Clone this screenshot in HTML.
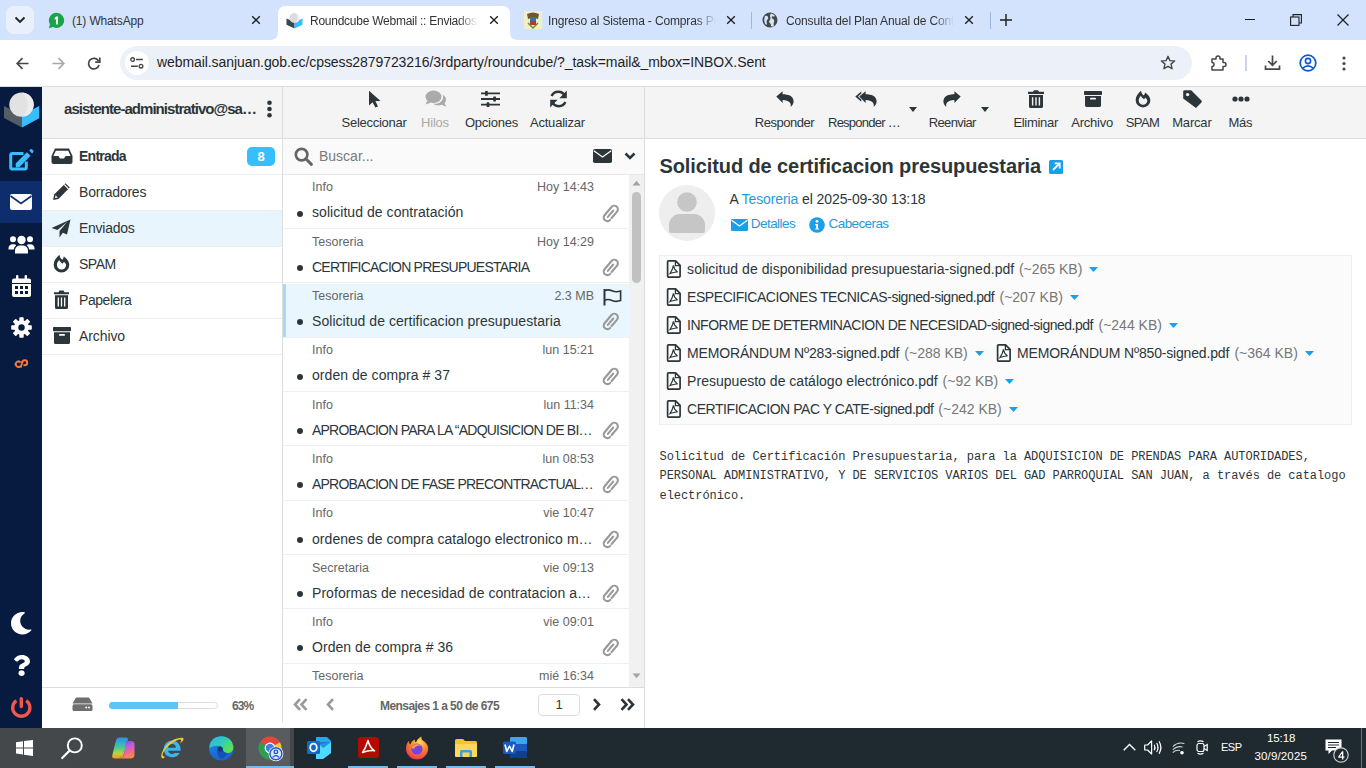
<!DOCTYPE html>
<html><head><meta charset="utf-8">
<style>
*{margin:0;padding:0;box-sizing:border-box}
html,body{width:1366px;height:768px;overflow:hidden;background:#fff;font-family:"Liberation Sans",sans-serif;color:#2c363a}
.a{position:absolute}
.t{position:absolute;white-space:nowrap;line-height:normal}
svg{position:absolute;overflow:visible}
</style></head>
<body>
<!-- ============ CHROME TAB STRIP ============ -->
<div class="a" style="left:0;top:0;width:1366px;height:40px;background:#d3e3fd"></div>
<!-- tab search -->
<div class="a" style="left:6px;top:6px;width:28px;height:28px;border-radius:8px;background:#e9effb"></div>
<svg style="left:14px;top:16px" width="12" height="8" viewBox="0 0 12 8"><path d="M1.5 1.5 L6 6 L10.5 1.5" fill="none" stroke="#1f1f1f" stroke-width="1.8"/></svg>
<!-- tab1 whatsapp -->
<svg style="left:48px;top:12px" width="17" height="17" viewBox="0 0 17 17"><path d="M8.5 0.8a7.6 7.6 0 0 0-6.6 11.4L0.9 16.2l4.1-1.1A7.6 7.6 0 1 0 8.5 0.8z" fill="#1aa34a"/><path d="M8.1 4.6H9.9V12.6H8.1V7L6.7 7.7V6.1Z" fill="#fff"/></svg>
<div class="t" style="left:72px;top:14px;font-size:12px;color:#333;letter-spacing:-0.15px">(1) WhatsApp</div>
<svg style="left:251px;top:15px" width="10" height="10" viewBox="0 0 10 10"><path d="M1.2 1.2L8.8 8.8M8.8 1.2L1.2 8.8" stroke="#1f1f1f" stroke-width="1.35"/></svg>
<!-- active tab -->
<svg style="left:270px;top:6px" width="250" height="34" viewBox="0 0 250 34"><path d="M0 34 Q8 34 8 26 L8 8 Q8 0 16 0 L232 0 Q240 0 240 8 L240 26 Q240 34 248 34 Z" fill="#fff"/></svg>
<svg style="left:286px;top:12px" width="17" height="17" viewBox="0 0 17 17"><path d="M0.5 6.5 L8.5 10 L8.5 16.5 L0.5 12.8Z" fill="#37474f"/><path d="M8.5 10 L16.5 6.5 L16.5 12.8 L8.5 16.5Z" fill="#37beff"/><circle cx="8.5" cy="6" r="5" fill="#dcdcdc"/><path d="M8.5 1 a5 5 0 0 1 0 10 a3 5 0 0 0 0-10z" fill="#f2f2f2"/></svg>
<div class="t" style="left:310px;top:14px;width:168px;overflow:hidden;font-size:12px;color:#333;letter-spacing:-0.25px;-webkit-mask-image:linear-gradient(90deg,#000 148px,transparent 168px)">Roundcube Webmail :: Enviados</div>
<svg style="left:489px;top:15px" width="10" height="10" viewBox="0 0 10 10"><path d="M1.2 1.2L8.8 8.8M8.8 1.2L1.2 8.8" stroke="#1f1f1f" stroke-width="1.35"/></svg>
<!-- tab3 -->
<svg style="left:524px;top:11px" width="18" height="18" viewBox="0 0 18 18"><rect x="0" y="0" width="18" height="18" fill="#f2efc8"/><path d="M3 3 Q9 0 15 3 L14 8 Q9 6 4 8Z" fill="#6b5a2a"/><rect x="6" y="6" width="6" height="8" fill="#3c6fb6"/><rect x="6" y="10" width="6" height="4" fill="#c9302c"/><path d="M4 12 L9 17 L14 12" fill="none" stroke="#6b8a3a" stroke-width="1.5"/></svg>
<div class="t" style="left:548px;top:14px;width:168px;overflow:hidden;font-size:12px;color:#333;letter-spacing:-0.15px;-webkit-mask-image:linear-gradient(90deg,#000 148px,transparent 168px)">Ingreso al Sistema - Compras Públicas</div>
<svg style="left:726px;top:15px" width="10" height="10" viewBox="0 0 10 10"><path d="M1.2 1.2L8.8 8.8M8.8 1.2L1.2 8.8" stroke="#1f1f1f" stroke-width="1.35"/></svg>
<div class="a" style="left:751px;top:12px;width:1px;height:17px;background:#9fb7de"></div>
<!-- tab4 -->
<svg style="left:762px;top:12px" width="16" height="16" viewBox="0 0 16 16"><circle cx="8" cy="8" r="7.5" fill="#474747"/><path d="M3 4 Q5 3 6 5 Q7 7 5 8 Q4 10 5 12 L4 13 Q1 10 3 4z M9 1.5 Q12 2 13 4 Q11 5 10 4 Q9 6 11 7 Q13 8 12 10 Q11 12 12 14 Q10 15 9 14 Q9 12 8 11 Q6 10 8 8 Q9 6 8 4 Q8 2 9 1.5z" fill="#d3e3fd"/></svg>
<div class="t" style="left:786px;top:14px;width:168px;overflow:hidden;font-size:12px;color:#333;letter-spacing:-0.15px;-webkit-mask-image:linear-gradient(90deg,#000 148px,transparent 168px)">Consulta del Plan Anual de Contratación</div>
<svg style="left:964px;top:15px" width="10" height="10" viewBox="0 0 10 10"><path d="M1.2 1.2L8.8 8.8M8.8 1.2L1.2 8.8" stroke="#1f1f1f" stroke-width="1.35"/></svg>
<div class="a" style="left:990px;top:12px;width:1px;height:17px;background:#9fb7de"></div>
<svg style="left:999px;top:13px" width="14" height="14" viewBox="0 0 14 14"><path d="M7 1V13M1 7H13" stroke="#1f1f1f" stroke-width="1.45"/></svg>
<!-- window controls -->
<div class="a" style="left:1245px;top:19px;width:10px;height:1.2px;background:#1f1f1f"></div>
<svg style="left:1290px;top:14px" width="12" height="12" viewBox="0 0 12 12"><rect x="0.6" y="3" width="8.4" height="8.4" fill="none" stroke="#1f1f1f" stroke-width="1.1"/><path d="M3 3V0.6H11.4V9H9" fill="none" stroke="#1f1f1f" stroke-width="1.1"/></svg>
<svg style="left:1337px;top:14px" width="12" height="12" viewBox="0 0 12 12"><path d="M0.5 0.5L11.5 11.5M11.5 0.5L0.5 11.5" stroke="#1f1f1f" stroke-width="1.2"/></svg>

<!-- ============ TOOLBAR ============ -->
<div class="a" style="left:0;top:40px;width:1366px;height:46px;background:#fff;border-radius:8px 8px 0 0"></div>
<svg style="left:16px;top:57px" width="13" height="13" viewBox="0 0 13 13"><path d="M12.5 6.5H1.5M6.5 1.2L1.2 6.5L6.5 11.8" fill="none" stroke="#474747" stroke-width="1.7"/></svg>
<svg style="left:52px;top:57px" width="13" height="13" viewBox="0 0 13 13"><path d="M0.5 6.5H11.5M6.5 1.2L11.8 6.5L6.5 11.8" fill="none" stroke="#a8a8a8" stroke-width="1.7"/></svg>
<svg style="left:87px;top:57px" width="14" height="13" viewBox="0 0 14 13"><path d="M11.6 4.2A5.3 5.3 0 1 0 12 8" fill="none" stroke="#474747" stroke-width="1.7"/><path d="M12.8 0.6V5.2H8.2" fill="none" stroke="#474747" stroke-width="1.7"/></svg>
<div class="a" style="left:120px;top:46px;width:1072px;height:34px;border-radius:17px;background:#ecf0f8"></div>
<div class="a" style="left:124.5px;top:51px;width:24px;height:24px;border-radius:12px;background:#fff"></div>
<svg style="left:130px;top:57px" width="14" height="12" viewBox="0 0 14 12"><circle cx="2.6" cy="2.6" r="1.8" fill="none" stroke="#474747" stroke-width="1.4"/><path d="M6 2.6H12.8M1 9.2H7.8" stroke="#474747" stroke-width="1.5"/><circle cx="11" cy="9.2" r="1.8" fill="none" stroke="#474747" stroke-width="1.4"/></svg>
<div class="t" style="left:157px;top:54px;font-size:14px;color:#1f1f1f;letter-spacing:-0.08px">webmail.sanjuan.gob.ec/cpsess2879723216/3rdparty/roundcube/?_task=mail&amp;_mbox=INBOX.Sent</div>
<svg style="left:1160px;top:55px" width="16" height="16" viewBox="0 0 16 16"><path d="M8 1.3L9.9 5.6L14.6 6L11 9.1L12.1 13.7L8 11.3L3.9 13.7L5 9.1L1.4 6L6.1 5.6Z" fill="none" stroke="#474747" stroke-width="1.4" stroke-linejoin="round"/></svg>
<svg style="left:1210px;top:55px" width="17" height="17" viewBox="0 0 17 17"><path d="M2 4H6V3A2 2 0 0 1 10 3V4H13V7.5H14A2 2 0 0 1 14 11.5H13V15H2V11.5A2 2 0 0 0 2 7.5Z" fill="none" stroke="#474747" stroke-width="1.5" stroke-linejoin="round"/></svg>
<div class="a" style="left:1245px;top:55px;width:1.5px;height:16px;background:#c7d4ea"></div>
<svg style="left:1264px;top:54px" width="17" height="17" viewBox="0 0 17 17"><path d="M8.5 1.5V11M4.2 7L8.5 11.3L12.8 7M1.5 11.5V15.2H15.5V11.5" fill="none" stroke="#474747" stroke-width="1.7"/></svg>
<svg style="left:1299px;top:54px" width="18" height="18" viewBox="0 0 18 18"><circle cx="9" cy="9" r="7.8" fill="none" stroke="#0b57d0" stroke-width="1.7"/><circle cx="9" cy="7" r="2.6" fill="none" stroke="#0b57d0" stroke-width="1.6"/><path d="M3.8 14.2Q9 9.6 14.2 14.2" fill="none" stroke="#0b57d0" stroke-width="1.6"/></svg>
<svg style="left:1342px;top:56px" width="4" height="15" viewBox="0 0 4 15"><circle cx="2" cy="2" r="1.6" fill="#474747"/><circle cx="2" cy="7.5" r="1.6" fill="#474747"/><circle cx="2" cy="13" r="1.6" fill="#474747"/></svg>
<div class="a" style="left:0;top:86px;width:1366px;height:1px;background:#dcdcdc"></div>

<!-- ============ TASKMENU ============ -->
<div class="a" style="left:0;top:87px;width:42px;height:641px;background:#071a40"></div>
<!-- logo -->
<svg style="left:3px;top:91px" width="37" height="37" viewBox="0 0 37 37"><path d="M1 15 L19 24 L19 36.4 L1 27Z" fill="#535d63"/><path d="M19 24 L36.2 15 L36.2 27.3 L19 36.4Z" fill="#37beff"/><circle cx="18.5" cy="13.6" r="12.2" fill="#e2e2e2"/><path d="M18.5 1.4 A12.2 12.2 0 0 1 18.5 25.8 A6 12.2 0 0 0 18.5 1.4Z" fill="#ececec"/></svg>
<!-- compose -->
<svg style="left:8px;top:147px" width="26" height="26" viewBox="0 0 26 26"><path d="M15.5 6.6H4.2A1.5 1.5 0 0 0 2.7 8.1V20.6A1.5 1.5 0 0 0 4.2 22.1H16.8A1.5 1.5 0 0 0 18.3 20.6V14.5" fill="none" stroke="#37beff" stroke-width="3"/><path d="M7.6 16.6L18.9 5.2L22.6 8.8L11.3 20.2L7.9 20.4Z" fill="#37beff"/><path d="M21.2 3.6L22.2 2.6A1.6 1.6 0 0 1 24.4 2.6L25 3.2A1.6 1.6 0 0 1 25 5.4L24 6.4Z" fill="#37beff"/></svg>
<!-- mail active -->
<div class="a" style="left:0;top:181px;width:42px;height:42px;background:#0d2d6c"></div>
<svg style="left:10px;top:194px" width="22" height="16" viewBox="0 0 22 16"><rect x="0" y="0" width="22" height="16" rx="2" fill="#fff"/><path d="M0.5 2 L11 9.5 L21.5 2" fill="none" stroke="#0d2d6c" stroke-width="1.6"/></svg>
<!-- contacts -->
<svg style="left:8px;top:235px" width="27" height="19" viewBox="0 0 27 19"><circle cx="5" cy="4.2" r="3" fill="#fff"/><circle cx="22" cy="4.2" r="3" fill="#fff"/><circle cx="13.5" cy="5" r="4.2" fill="#fff"/><path d="M7 18.5V15.5A5 5 0 0 1 12 10.5H15A5 5 0 0 1 20 15.5V18.5Z" fill="#fff"/><path d="M0.5 13.5A4 4 0 0 1 4.5 9.3H6.3A4 4 0 0 1 8.2 10.2A6 6 0 0 0 5.8 14.5H0.5Z M26.5 13.5A4 4 0 0 0 22.5 9.3H20.7A4 4 0 0 0 18.8 10.2A6 6 0 0 1 21.2 14.5H26.5Z" fill="#fff"/></svg>
<!-- calendar -->
<svg style="left:12px;top:275px" width="19" height="22" viewBox="0 0 19 22"><rect x="4" y="0" width="2.4" height="5" rx="1" fill="#fff"/><rect x="12.6" y="0" width="2.4" height="5" rx="1" fill="#fff"/><path d="M0 5.5A2 2 0 0 1 2 3.5H17A2 2 0 0 1 19 5.5V8H0Z" fill="#fff"/><path d="M0 9H19V20A2 2 0 0 1 17 22H2A2 2 0 0 1 0 20Z" fill="#fff"/><g fill="#071a40"><rect x="3" y="11" width="3" height="3"/><rect x="8" y="11" width="3" height="3"/><rect x="13" y="11" width="3" height="3"/><rect x="3" y="16" width="3" height="3"/><rect x="8" y="16" width="3" height="3"/><rect x="13" y="16" width="3" height="3"/></g></svg>
<!-- settings gear -->
<svg style="left:11px;top:317px" width="21" height="21" viewBox="0 0 21 21"><g transform="translate(10.5 10.5)" fill="#fff"><circle r="7.3"/><rect x="-2.2" y="-10.3" width="4.4" height="5" rx="0.8"/><rect x="-2.2" y="5.3" width="4.4" height="5" rx="0.8"/><rect x="-10.3" y="-2.2" width="5" height="4.4" rx="0.8"/><rect x="5.3" y="-2.2" width="5" height="4.4" rx="0.8"/><g transform="rotate(45)"><rect x="-2.2" y="-10.3" width="4.4" height="5" rx="0.8"/><rect x="-2.2" y="5.3" width="4.4" height="5" rx="0.8"/><rect x="-10.3" y="-2.2" width="5" height="4.4" rx="0.8"/><rect x="5.3" y="-2.2" width="5" height="4.4" rx="0.8"/></g><circle r="3.2" fill="#071a40"/></g></svg>
<!-- cP -->
<svg style="left:14.5px;top:358.5px" width="14" height="9" viewBox="0 0 14 9"><path d="M5.6 3.6A2.7 2.7 0 1 0 5 7.4" fill="none" stroke="#f4773e" stroke-width="2"/><path d="M7.2 3.4A2.5 2.5 0 1 1 9.6 6.2H8.4" fill="none" stroke="#f4773e" stroke-width="2"/><path d="M7.6 2.2L5.6 8.6" stroke="#f4773e" stroke-width="1.9"/></svg>
<!-- moon -->
<svg style="left:11px;top:612px" width="20.5" height="22.5" viewBox="27 0 458 512" preserveAspectRatio="none"><path d="M283.211 512c78.962 0 151.079-35.925 198.857-94.792 7.068-8.708-.639-21.43-11.562-19.35-124.203 23.654-238.262-71.576-238.262-196.954 0-72.222 38.662-138.635 101.498-174.394 9.686-5.512 7.25-20.197-3.756-22.23A258.156 258.156 0 0 0 283.211 0c-141.309 0-256 114.511-256 256 0 141.309 114.511 256 256 256z" fill="#fff"/></svg>
<!-- question -->
<svg style="left:14px;top:654.5px" width="16" height="21" viewBox="24 0 354 512" preserveAspectRatio="none"><path d="M202.021 0C122.202 0 70.503 32.703 29.914 91.026c-7.363 10.58-5.093 25.086 5.178 32.874l43.138 32.709c10.373 7.865 25.132 6.026 33.253-4.148 25.049-31.381 43.63-49.449 82.757-49.449 30.764 0 68.816 19.799 68.816 49.631 0 22.552-18.617 34.134-48.993 51.164-35.423 19.86-82.299 44.576-82.299 106.405V320c0 13.255 10.745 24 24 24h72.471c13.255 0 24-10.745 24-24v-5.773c0-42.86 125.268-44.645 125.268-160.627C377.504 66.256 286.902 0 202.021 0zM192 373.459c-38.196 0-69.271 31.075-69.271 69.271 0 38.195 31.075 69.27 69.271 69.27s69.271-31.075 69.271-69.271-31.075-69.27-69.271-69.27z" fill="#fff"/></svg>
<!-- power -->
<svg style="left:10px;top:695px" width="23" height="24" viewBox="0 0 23 24"><path d="M6.4 5.6A8.6 8.6 0 1 0 16.2 5.6" fill="none" stroke="#f0574e" stroke-width="3.3"/><path d="M11.3 3.6V11.6" stroke="#f0574e" stroke-width="3.4" stroke-linecap="round"/></svg>

<!-- ============ FOLDER PANEL ============ -->
<div class="a" style="left:42px;top:87px;width:240px;height:51px;background:#f4f4f4"></div>
<div class="a" style="left:42px;top:138px;width:240px;height:1px;background:#ddd"></div>
<div class="a" style="left:282px;top:87px;width:1px;height:635px;background:#ddd"></div>
<div class="t" style="left:64px;top:99.5px;font-size:15px;font-weight:700;color:#2c363a;letter-spacing:-0.96px">asistente-administrativo@sa…</div>
<svg style="left:266px;top:100px" width="7" height="18" viewBox="0 0 7 18"><circle cx="3.5" cy="2.7" r="2.3" fill="#2c363a"/><circle cx="3.5" cy="9" r="2.3" fill="#2c363a"/><circle cx="3.5" cy="15.3" r="2.3" fill="#2c363a"/></svg>
<!-- folder rows -->
<div class="a" style="left:42px;top:174px;width:240px;height:1px;background:#eee"></div>
<div class="a" style="left:42px;top:210px;width:240px;height:1px;background:#eee"></div>
<div class="a" style="left:42px;top:211px;width:240px;height:35px;background:#e9f5fc"></div>
<div class="a" style="left:42px;top:246px;width:240px;height:1px;background:#eee"></div>
<div class="a" style="left:42px;top:282px;width:240px;height:1px;background:#eee"></div>
<div class="a" style="left:42px;top:318px;width:240px;height:1px;background:#eee"></div>
<div class="a" style="left:42px;top:354px;width:240px;height:1px;background:#eee"></div>
<!-- inbox icon -->
<svg style="left:51px;top:148px" width="22" height="16" viewBox="0 0 22 16"><path d="M4 0.5H18L21.5 8V14A2 2 0 0 1 19.5 16H2.5A2 2 0 0 1 0.5 14V8Z" fill="#2c363a"/><path d="M4.8 2.8H17.2L19.6 8H14.5L13 10.5H9L7.5 8H2.4Z" fill="#fff"/></svg>
<div class="t" style="left:79px;top:148px;font-size:14px;font-weight:700;color:#2c363a;letter-spacing:-0.75px">Entrada</div>
<div class="a" style="left:247px;top:147px;width:28px;height:19px;border-radius:5px;background:#37beff"></div>
<div class="t" style="left:247px;top:149px;width:28px;text-align:center;font-size:13px;font-weight:700;color:#fff">8</div>
<!-- pencil -->
<svg style="left:52px;top:182px" width="19" height="19" viewBox="0 0 19 19"><path d="M13.5 1.2L17.8 5.5L6.4 16.9L1.2 18L2.1 12.6Z" fill="#2c363a"/><path d="M3.6 13.2L5.8 15.4L3 16.1Z" fill="#fff"/><path d="M12.2 2.5L16.5 6.8" stroke="#fff" stroke-width="1.2"/></svg>
<div class="t" style="left:79px;top:184px;font-size:14px;color:#2c363a;letter-spacing:-0.2px">Borradores</div>
<!-- paper plane -->
<svg style="left:51px;top:219px" width="20" height="19" viewBox="0 0 20 19"><path d="M19.5 0.5L0.5 9L6.5 11L16 3L8.5 12V18.5L11.8 13.8L16 15.5Z" fill="#2c363a"/></svg>
<div class="t" style="left:79px;top:220px;font-size:14px;color:#2c363a;letter-spacing:-0.25px">Enviados</div>
<!-- fire -->
<svg style="left:53px;top:254px" width="17" height="19" viewBox="0 0 17 19"><path d="M8.5 18.5A7.8 7.8 0 0 1 0.7 10.7C0.7 6.8 3.3 3.6 6.4 0.8C6.9 3.5 8 4.8 9.3 5.8C10.1 4.8 10.6 3.8 10.8 2.6C14 4.8 16.3 7.9 16.3 10.7A7.8 7.8 0 0 1 8.5 18.5Z" fill="#2c363a"/><path d="M8.5 15.6A4.6 4.6 0 0 1 3.9 11C3.9 9 4.9 7.6 6.3 6C6.8 7.6 8.2 8.8 9.6 9.8C10 9.2 10.7 8.6 10.9 7.8C12.3 9.2 13.1 10.2 13.1 11A4.6 4.6 0 0 1 8.5 15.6Z" fill="#fff"/></svg>
<div class="t" style="left:79px;top:256px;font-size:14px;color:#2c363a;letter-spacing:-0.5px">SPAM</div>
<!-- trash -->
<svg style="left:54px;top:290px" width="15" height="19" viewBox="0 0 15 19"><path d="M0 2.2H4.5L5.5 0.5H9.5L10.5 2.2H15V4.3H0Z" fill="#2c363a"/><path d="M1 5.3H14V17.5A1.5 1.5 0 0 1 12.5 19H2.5A1.5 1.5 0 0 1 1 17.5Z" fill="#2c363a"/><path d="M4.3 7.5V16.5M7.5 7.5V16.5M10.7 7.5V16.5" stroke="#fff" stroke-width="1.3"/></svg>
<div class="t" style="left:79px;top:292px;font-size:14px;color:#2c363a;letter-spacing:-0.45px">Papelera</div>
<!-- archive -->
<svg style="left:53px;top:327px" width="18" height="17" viewBox="0 0 18 17"><rect x="0" y="0" width="18" height="4.2" rx="0.8" fill="#2c363a"/><path d="M1 5.2H17V15.5A1.5 1.5 0 0 1 15.5 17H2.5A1.5 1.5 0 0 1 1 15.5Z" fill="#2c363a"/><rect x="6" y="7" width="6" height="1.8" rx="0.9" fill="#fff"/></svg>
<div class="t" style="left:79px;top:328px;font-size:14px;color:#2c363a;letter-spacing:-0.1px">Archivo</div>
<!-- footer -->
<div class="a" style="left:42px;top:687px;width:240px;height:1px;background:#ddd"></div>
<svg style="left:72px;top:697px" width="21" height="14" viewBox="0 0 21 14"><path d="M4 0.5H17L20.5 6.5H0.5Z" fill="#6f6f6f"/><rect x="0.5" y="7.2" width="20" height="6.8" rx="1.5" fill="#6f6f6f"/><circle cx="14.2" cy="10.6" r="1" fill="#fff"/><circle cx="17" cy="10.6" r="1" fill="#fff"/></svg>
<div class="a" style="left:109px;top:701.5px;width:109px;height:7.5px;border-radius:4px;border:1px solid #dcdcdc;background:#fff"></div>
<div class="a" style="left:109px;top:701.5px;width:69px;height:7.5px;border-radius:4px 0 0 4px;background:#5ec4f4"></div>
<div class="t" style="left:232px;top:698.5px;font-size:12px;font-weight:700;color:#666;letter-spacing:-0.9px">63%</div>

<!-- ============ MESSAGE LIST ============ -->
<div class="a" style="left:283px;top:87px;width:361px;height:51px;background:#f4f4f4"></div>
<div class="a" style="left:283px;top:138px;width:361px;height:1px;background:#ddd"></div>
<div class="a" style="left:644px;top:87px;width:1px;height:641px;background:#ddd"></div>
<div class="a" style="left:283px;top:139px;width:361px;height:35px;background:#fafafa"></div>
<div class="a" style="left:283px;top:174px;width:361px;height:1px;background:#e8e8e8"></div>
<div class="a" style="left:629px;top:175px;width:15px;height:512px;background:#f1f1f1"></div>
<div class="a" style="left:632px;top:192px;width:9px;height:91px;border-radius:4.5px;background:#c1c1c1"></div>
<svg style="left:632px;top:180px" width="9" height="6" viewBox="0 0 9 6"><path d="M0.5 5.5L4.5 0.8L8.5 5.5Z" fill="#a3a3a3"/></svg>
<svg style="left:632px;top:673px" width="9" height="6" viewBox="0 0 9 6"><path d="M0.5 0.5L4.5 5.2L8.5 0.5Z" fill="#a3a3a3"/></svg>
<div class="a" style="left:283px;top:228.0px;width:346px;height:1px;background:#efefef"></div>
<div class="t" style="left:312px;top:180.3px;font-size:12.5px;color:#666">Info</div>
<div class="t" style="left:480px;top:180.3px;width:114px;text-align:right;font-size:12.5px;color:#666">Hoy 14:43</div>
<div class="a" style="left:297px;top:210.5px;width:6px;height:6px;border-radius:3px;background:#2c363a"></div>
<div class="t" style="left:312px;top:204.4px;width:282px;overflow:hidden;text-overflow:ellipsis;font-size:14px;color:#2c363a;letter-spacing:0.05px">solicitud de contratación</div>
<svg style="left:602px;top:203.5px" width="19" height="20" viewBox="0 0 19 20"><g transform="rotate(40 9.5 10)"><path d="M12.2 13V4.6A3.6 3.6 0 0 0 5 4.6V15.4A3.6 3.6 0 0 0 12.2 15.4" fill="none" stroke="#999" stroke-width="2.1" stroke-linecap="round"/><path d="M8.6 6.2V14.6" fill="none" stroke="#999" stroke-width="2" stroke-linecap="round"/></g></svg>
<div class="a" style="left:283px;top:282.35px;width:346px;height:1px;background:#efefef"></div>
<div class="t" style="left:312px;top:234.65px;font-size:12.5px;color:#666">Tesoreria</div>
<div class="t" style="left:480px;top:234.65px;width:114px;text-align:right;font-size:12.5px;color:#666">Hoy 14:29</div>
<div class="a" style="left:297px;top:264.85px;width:6px;height:6px;border-radius:3px;background:#2c363a"></div>
<div class="t" style="left:312px;top:258.75px;width:282px;overflow:hidden;text-overflow:ellipsis;font-size:14px;color:#2c363a;letter-spacing:-0.78px">CERTIFICACION PRESUPUESTARIA</div>
<svg style="left:602px;top:257.85px" width="19" height="20" viewBox="0 0 19 20"><g transform="rotate(40 9.5 10)"><path d="M12.2 13V4.6A3.6 3.6 0 0 0 5 4.6V15.4A3.6 3.6 0 0 0 12.2 15.4" fill="none" stroke="#999" stroke-width="2.1" stroke-linecap="round"/><path d="M8.6 6.2V14.6" fill="none" stroke="#999" stroke-width="2" stroke-linecap="round"/></g></svg>
<div class="a" style="left:283px;top:283.7px;width:346px;height:54px;background:#e9f6fd"></div>
<div class="a" style="left:283px;top:283.7px;width:2.5px;height:54px;background:#a9daf3"></div>
<div class="a" style="left:283px;top:336.7px;width:346px;height:1px;background:#efefef"></div>
<div class="t" style="left:312px;top:289.0px;font-size:12.5px;color:#666">Tesoreria</div>
<div class="t" style="left:480px;top:289.0px;width:114px;text-align:right;font-size:12.5px;color:#666">2.3 MB</div>
<div class="a" style="left:297px;top:319.2px;width:6px;height:6px;border-radius:3px;background:#2c363a"></div>
<div class="t" style="left:312px;top:313.1px;width:282px;overflow:hidden;text-overflow:ellipsis;font-size:14px;color:#2c363a;letter-spacing:0.05px">Solicitud de certificacion presupuestaria</div>
<svg style="left:602px;top:312.2px" width="19" height="20" viewBox="0 0 19 20"><g transform="rotate(40 9.5 10)"><path d="M12.2 13V4.6A3.6 3.6 0 0 0 5 4.6V15.4A3.6 3.6 0 0 0 12.2 15.4" fill="none" stroke="#999" stroke-width="2.1" stroke-linecap="round"/><path d="M8.6 6.2V14.6" fill="none" stroke="#999" stroke-width="2" stroke-linecap="round"/></g></svg>
<svg style="left:602.5px;top:288.3px" width="19" height="18" viewBox="0 0 19 18"><path d="M1.5 1V17.5" stroke="#2c363a" stroke-width="2"/><path d="M1.5 2.6Q5 1 9 2.8Q13 4.6 17.6 3.1V12.6Q13 14.2 9 12.4Q5 10.6 1.5 12.2" fill="none" stroke="#2c363a" stroke-width="1.6"/></svg>
<div class="a" style="left:283px;top:391.05px;width:346px;height:1px;background:#efefef"></div>
<div class="t" style="left:312px;top:343.35px;font-size:12.5px;color:#666">Info</div>
<div class="t" style="left:480px;top:343.35px;width:114px;text-align:right;font-size:12.5px;color:#666">lun 15:21</div>
<div class="a" style="left:297px;top:373.55px;width:6px;height:6px;border-radius:3px;background:#2c363a"></div>
<div class="t" style="left:312px;top:367.45px;width:282px;overflow:hidden;text-overflow:ellipsis;font-size:14px;color:#2c363a;letter-spacing:0.05px">orden de compra # 37</div>
<svg style="left:602px;top:366.55px" width="19" height="20" viewBox="0 0 19 20"><g transform="rotate(40 9.5 10)"><path d="M12.2 13V4.6A3.6 3.6 0 0 0 5 4.6V15.4A3.6 3.6 0 0 0 12.2 15.4" fill="none" stroke="#999" stroke-width="2.1" stroke-linecap="round"/><path d="M8.6 6.2V14.6" fill="none" stroke="#999" stroke-width="2" stroke-linecap="round"/></g></svg>
<div class="a" style="left:283px;top:445.4px;width:346px;height:1px;background:#efefef"></div>
<div class="t" style="left:312px;top:397.7px;font-size:12.5px;color:#666">Info</div>
<div class="t" style="left:480px;top:397.7px;width:114px;text-align:right;font-size:12.5px;color:#666">lun 11:34</div>
<div class="a" style="left:297px;top:427.9px;width:6px;height:6px;border-radius:3px;background:#2c363a"></div>
<div class="t" style="left:312px;top:421.8px;width:282px;overflow:hidden;text-overflow:ellipsis;font-size:14px;color:#2c363a;letter-spacing:-0.78px">APROBACION PARA LA “ADQUISICION DE BIENES</div>
<svg style="left:602px;top:420.9px" width="19" height="20" viewBox="0 0 19 20"><g transform="rotate(40 9.5 10)"><path d="M12.2 13V4.6A3.6 3.6 0 0 0 5 4.6V15.4A3.6 3.6 0 0 0 12.2 15.4" fill="none" stroke="#999" stroke-width="2.1" stroke-linecap="round"/><path d="M8.6 6.2V14.6" fill="none" stroke="#999" stroke-width="2" stroke-linecap="round"/></g></svg>
<div class="a" style="left:283px;top:499.75px;width:346px;height:1px;background:#efefef"></div>
<div class="t" style="left:312px;top:452.05px;font-size:12.5px;color:#666">Info</div>
<div class="t" style="left:480px;top:452.05px;width:114px;text-align:right;font-size:12.5px;color:#666">lun 08:53</div>
<div class="a" style="left:297px;top:482.25px;width:6px;height:6px;border-radius:3px;background:#2c363a"></div>
<div class="t" style="left:312px;top:476.15px;width:282px;overflow:hidden;text-overflow:ellipsis;font-size:14px;color:#2c363a;letter-spacing:-0.78px">APROBACION DE FASE PRECONTRACTUAL PARA</div>
<svg style="left:602px;top:475.25px" width="19" height="20" viewBox="0 0 19 20"><g transform="rotate(40 9.5 10)"><path d="M12.2 13V4.6A3.6 3.6 0 0 0 5 4.6V15.4A3.6 3.6 0 0 0 12.2 15.4" fill="none" stroke="#999" stroke-width="2.1" stroke-linecap="round"/><path d="M8.6 6.2V14.6" fill="none" stroke="#999" stroke-width="2" stroke-linecap="round"/></g></svg>
<div class="a" style="left:283px;top:554.1px;width:346px;height:1px;background:#efefef"></div>
<div class="t" style="left:312px;top:506.4px;font-size:12.5px;color:#666">Info</div>
<div class="t" style="left:480px;top:506.4px;width:114px;text-align:right;font-size:12.5px;color:#666">vie 10:47</div>
<div class="a" style="left:297px;top:536.6px;width:6px;height:6px;border-radius:3px;background:#2c363a"></div>
<div class="t" style="left:312px;top:530.5px;width:282px;overflow:hidden;text-overflow:ellipsis;font-size:14px;color:#2c363a;letter-spacing:0.05px">ordenes de compra catalogo electronico mes de septiembre</div>
<svg style="left:602px;top:529.6px" width="19" height="20" viewBox="0 0 19 20"><g transform="rotate(40 9.5 10)"><path d="M12.2 13V4.6A3.6 3.6 0 0 0 5 4.6V15.4A3.6 3.6 0 0 0 12.2 15.4" fill="none" stroke="#999" stroke-width="2.1" stroke-linecap="round"/><path d="M8.6 6.2V14.6" fill="none" stroke="#999" stroke-width="2" stroke-linecap="round"/></g></svg>
<div class="a" style="left:283px;top:608.45px;width:346px;height:1px;background:#efefef"></div>
<div class="t" style="left:312px;top:560.75px;font-size:12.5px;color:#666">Secretaria</div>
<div class="t" style="left:480px;top:560.75px;width:114px;text-align:right;font-size:12.5px;color:#666">vie 09:13</div>
<div class="a" style="left:297px;top:590.95px;width:6px;height:6px;border-radius:3px;background:#2c363a"></div>
<div class="t" style="left:312px;top:584.85px;width:282px;overflow:hidden;text-overflow:ellipsis;font-size:14px;color:#2c363a;letter-spacing:0.05px">Proformas de necesidad de contratacion adquisicion de bienes</div>
<svg style="left:602px;top:583.95px" width="19" height="20" viewBox="0 0 19 20"><g transform="rotate(40 9.5 10)"><path d="M12.2 13V4.6A3.6 3.6 0 0 0 5 4.6V15.4A3.6 3.6 0 0 0 12.2 15.4" fill="none" stroke="#999" stroke-width="2.1" stroke-linecap="round"/><path d="M8.6 6.2V14.6" fill="none" stroke="#999" stroke-width="2" stroke-linecap="round"/></g></svg>
<div class="a" style="left:283px;top:662.8px;width:346px;height:1px;background:#efefef"></div>
<div class="t" style="left:312px;top:615.1px;font-size:12.5px;color:#666">Info</div>
<div class="t" style="left:480px;top:615.1px;width:114px;text-align:right;font-size:12.5px;color:#666">vie 09:01</div>
<div class="a" style="left:297px;top:645.3px;width:6px;height:6px;border-radius:3px;background:#2c363a"></div>
<div class="t" style="left:312px;top:639.2px;width:282px;overflow:hidden;text-overflow:ellipsis;font-size:14px;color:#2c363a;letter-spacing:0.05px">Orden de compra # 36</div>
<svg style="left:602px;top:638.3px" width="19" height="20" viewBox="0 0 19 20"><g transform="rotate(40 9.5 10)"><path d="M12.2 13V4.6A3.6 3.6 0 0 0 5 4.6V15.4A3.6 3.6 0 0 0 12.2 15.4" fill="none" stroke="#999" stroke-width="2.1" stroke-linecap="round"/><path d="M8.6 6.2V14.6" fill="none" stroke="#999" stroke-width="2" stroke-linecap="round"/></g></svg>
<div class="t" style="left:312px;top:669.45px;font-size:12.5px;color:#666">Tesoreria</div>
<div class="t" style="left:480px;top:669.45px;width:114px;text-align:right;font-size:12.5px;color:#666">mié 16:34</div>

<!-- list toolbar -->
<svg style="left:368px;top:90px" width="14" height="18" viewBox="0 0 14 18"><path d="M1 0.8V15.6L4.6 12.2L7.4 17.6L10 16.4L7.4 11.1H12.6Z" fill="#2c363a"/></svg>
<div class="t" style="left:341.5px;top:115px;font-size:13px;color:#2c363a;letter-spacing:-0.26px">Seleccionar</div>
<svg style="left:425px;top:90px" width="22" height="18" viewBox="0 0 22 18"><ellipse cx="8.5" cy="6.8" rx="8" ry="6.2" fill="#aaa"/><path d="M2 11L0.6 14.6L6 12.4Z" fill="#aaa"/><path d="M17.8 4.8A7 5.8 0 0 1 21 9.6A7 5.8 0 0 1 19.6 13.2L21.3 16.8L16.6 14.8A8 6 0 0 1 8 13.8A9 7 0 0 0 17.8 4.8Z" fill="#aaa"/></svg>
<div class="t" style="left:421px;top:115px;font-size:13px;color:#aaa;letter-spacing:-0.2px">Hilos</div>
<svg style="left:481px;top:91px" width="19" height="16" viewBox="0 0 19 16"><path d="M0 2.4H19M0 8H19M0 13.6H19" stroke="#2c363a" stroke-width="1.9"/><rect x="4" y="0" width="2.8" height="4.8" rx="0.6" fill="#2c363a"/><rect x="12.2" y="5.6" width="2.8" height="4.8" rx="0.6" fill="#2c363a"/><rect x="5.6" y="11.2" width="2.8" height="4.8" rx="0.6" fill="#2c363a"/></svg>
<div class="t" style="left:465px;top:115px;font-size:13px;color:#2c363a;letter-spacing:-0.25px">Opciones</div>
<svg style="left:549px;top:90px" width="19" height="18" viewBox="0 0 19 18"><path d="M16 6.2A7.4 7.4 0 0 0 2.6 6" fill="none" stroke="#2c363a" stroke-width="2.5"/><path d="M17.8 0.6V8.2H10.4Z" fill="#2c363a"/><path d="M3 11.8A7.4 7.4 0 0 0 16.4 12" fill="none" stroke="#2c363a" stroke-width="2.5"/><path d="M1.2 17.4V9.8H8.6Z" fill="#2c363a"/></svg>
<div class="t" style="left:530px;top:115px;font-size:13px;color:#2c363a;letter-spacing:-0.22px">Actualizar</div>
<!-- search bar -->
<svg style="left:294px;top:147px" width="19" height="19" viewBox="0 0 19 19"><circle cx="7.6" cy="7.6" r="5.8" fill="none" stroke="#666" stroke-width="2.7"/><path d="M11.8 11.8L17.4 17.4" stroke="#666" stroke-width="3" stroke-linecap="round"/></svg>
<div class="t" style="left:319px;top:148px;font-size:14px;color:#7a7a7a">Buscar...</div>
<svg style="left:593px;top:149px" width="19" height="14" viewBox="0 0 19 14"><rect x="0" y="0" width="19" height="14" rx="1.8" fill="#2c363a"/><path d="M0.8 1.8L9.5 8L18.2 1.8" fill="none" stroke="#fafafa" stroke-width="1.4"/></svg>
<svg style="left:624px;top:152px" width="12" height="8" viewBox="0 0 12 8"><path d="M1.5 1.5L6 6L10.5 1.5" fill="none" stroke="#2c363a" stroke-width="2.6"/></svg>
<!-- list footer -->
<div class="a" style="left:283px;top:687px;width:361px;height:1px;background:#ddd"></div>
<svg style="left:293px;top:698px" width="15" height="13" viewBox="0 0 15 13"><path d="M7 1.2L2 6.5L7 11.8M13.5 1.2L8.5 6.5L13.5 11.8" fill="none" stroke="#9a9a9a" stroke-width="2.6"/></svg>
<svg style="left:326px;top:698px" width="9" height="13" viewBox="0 0 9 13"><path d="M7 1.2L2 6.5L7 11.8" fill="none" stroke="#9a9a9a" stroke-width="2.6"/></svg>
<div class="t" style="left:380px;top:699px;font-size:12px;font-weight:700;color:#666;letter-spacing:-0.56px">Mensajes 1 a 50 de 675</div>
<div class="a" style="left:538px;top:694px;width:42px;height:22px;border:1px solid #ddd;border-radius:4px;background:#fff"></div>
<div class="t" style="left:538px;top:697px;width:42px;text-align:center;font-size:13px;color:#2c363a">1</div>
<svg style="left:592px;top:698px" width="9" height="13" viewBox="0 0 9 13"><path d="M2 1.2L7 6.5L2 11.8" fill="none" stroke="#2c363a" stroke-width="2.6"/></svg>
<svg style="left:620px;top:698px" width="15" height="13" viewBox="0 0 15 13"><path d="M1.5 1.2L6.5 6.5L1.5 11.8M8 1.2L13 6.5L8 11.8" fill="none" stroke="#2c363a" stroke-width="2.6"/></svg>

<!-- ============ PREVIEW ============ -->
<div class="a" style="left:645px;top:87px;width:721px;height:51px;background:#f4f4f4"></div>
<div class="a" style="left:645px;top:138px;width:721px;height:1px;background:#ddd"></div>
<!-- reply -->
<svg style="left:776px;top:91px" width="18" height="16" viewBox="0 0 18 16"><path d="M0.3 5.6L6.6 0.2V3.2C12.4 3.3 17.6 4.8 17.6 10.6C17.6 12.8 16.4 14.6 14.6 15.9C15.6 12.2 13.6 9.4 6.6 8.9V12Z" fill="#2c363a"/></svg>
<div class="t" style="left:754.8px;top:115px;font-size:13px;color:#2c363a;letter-spacing:-0.49px">Responder</div>
<!-- reply all -->
<svg style="left:855px;top:91px" width="22" height="16" viewBox="0 0 22 16"><path d="M0.3 5.6L6.3 0.4V2.6L3 5.6L6.3 8.6V10.8Z" fill="#2c363a"/><path d="M4.3 5.6L10.6 0.2V3.2C16.4 3.3 21.6 4.8 21.6 10.6C21.6 12.8 20.4 14.6 18.6 15.9C19.6 12.2 17.6 9.4 10.6 8.9V12Z" fill="#2c363a"/></svg>
<div class="t" style="left:828px;top:115px;font-size:13px;color:#2c363a;letter-spacing:-0.75px">Responder …</div>
<svg style="left:909px;top:107px" width="8" height="5" viewBox="0 0 8 5"><path d="M0 0H8L4 5Z" fill="#2c363a"/></svg>
<!-- forward -->
<svg style="left:943px;top:91px" width="18" height="16" viewBox="0 0 18 16"><path d="M17.7 5.6L11.4 0.2V3.2C5.6 3.3 0.4 4.8 0.4 10.6C0.4 12.8 1.6 14.6 3.4 15.9C2.4 12.2 4.4 9.4 11.4 8.9V12Z" fill="#2c363a"/></svg>
<div class="t" style="left:928.7px;top:115px;font-size:13px;color:#2c363a;letter-spacing:-0.61px">Reenviar</div>
<svg style="left:980.5px;top:107px" width="8" height="5" viewBox="0 0 8 5"><path d="M0 0H8L4 5Z" fill="#2c363a"/></svg>
<!-- delete -->
<svg style="left:1028px;top:90px" width="16" height="18" viewBox="0 0 16 18"><path d="M0 1.8H5L6 0.2H10L11 1.8H16V4H0Z" fill="#2c363a"/><path d="M1 5H15V16.4A1.6 1.6 0 0 1 13.4 18H2.6A1.6 1.6 0 0 1 1 16.4Z" fill="#2c363a"/><path d="M4.6 7.2V15.6M8 7.2V15.6M11.4 7.2V15.6" stroke="#f4f4f4" stroke-width="1.4"/></svg>
<div class="t" style="left:1013.4px;top:115px;font-size:13px;color:#2c363a;letter-spacing:-0.3px">Eliminar</div>
<!-- archive -->
<svg style="left:1083.5px;top:91px" width="18" height="16" viewBox="0 0 18 16"><rect x="0" y="0" width="18" height="4" rx="0.8" fill="#2c363a"/><path d="M1 5H17V14.6A1.4 1.4 0 0 1 15.6 16H2.4A1.4 1.4 0 0 1 1 14.6Z" fill="#2c363a"/><rect x="6" y="6.8" width="6" height="1.8" rx="0.9" fill="#f4f4f4"/></svg>
<div class="t" style="left:1071.2px;top:115px;font-size:13px;color:#2c363a;letter-spacing:-0.23px">Archivo</div>
<!-- spam fire -->
<svg style="left:1135px;top:90px" width="16" height="18" viewBox="0 0 17 19"><path d="M8.5 18.5A7.8 7.8 0 0 1 0.7 10.7C0.7 6.8 3.3 3.6 6.4 0.8C6.9 3.5 8 4.8 9.3 5.8C10.1 4.8 10.6 3.8 10.8 2.6C14 4.8 16.3 7.9 16.3 10.7A7.8 7.8 0 0 1 8.5 18.5Z" fill="#2c363a"/><path d="M8.5 15.6A4.6 4.6 0 0 1 3.9 11C3.9 9 4.9 7.6 6.3 6C6.8 7.6 8.2 8.8 9.6 9.8C10 9.2 10.7 8.6 10.9 7.8C12.3 9.2 13.1 10.2 13.1 11A4.6 4.6 0 0 1 8.5 15.6Z" fill="#f4f4f4"/></svg>
<div class="t" style="left:1125.7px;top:115px;font-size:13px;color:#2c363a;letter-spacing:-0.57px">SPAM</div>
<!-- tag -->
<svg style="left:1183px;top:90px" width="19" height="18" viewBox="0 0 19 18"><path d="M0.2 1.6A1.4 1.4 0 0 1 1.6 0.2H8.2L18.4 10.4A1.6 1.6 0 0 1 18.4 12.6L13 18L0.2 8.4Z" fill="#2c363a"/><circle cx="4.6" cy="4.6" r="1.7" fill="#f4f4f4"/></svg>
<div class="t" style="left:1172.2px;top:115px;font-size:13px;color:#2c363a;letter-spacing:-0.18px">Marcar</div>
<!-- more -->
<svg style="left:1232px;top:95.5px" width="18" height="6" viewBox="0 0 18 6"><circle cx="3" cy="3" r="2.6" fill="#2c363a"/><circle cx="9" cy="3" r="2.6" fill="#2c363a"/><circle cx="15" cy="3" r="2.6" fill="#2c363a"/></svg>
<div class="t" style="left:1228.4px;top:115px;font-size:13px;color:#2c363a;letter-spacing:-0.2px">Más</div>

<!-- subject -->
<div class="t" style="left:659.5px;top:154.5px;font-size:20px;font-weight:700;color:#2c363a;letter-spacing:-0.1px">Solicitud de certificacion presupuestaria</div>
<svg style="left:1049px;top:160px" width="14" height="14" viewBox="0 0 14 14"><rect x="0" y="0" width="14" height="14" rx="1.5" fill="#1a9fe8"/><path d="M4 10L10.4 3.6M5.6 3.3H10.7V8.4" fill="none" stroke="#fff" stroke-width="1.8"/></svg>
<!-- avatar -->
<div class="a" style="left:659px;top:185px;width:56px;height:56px;border-radius:28px;background:#eee"></div>
<svg style="left:669px;top:192px" width="36" height="41" viewBox="0 0 36 41"><circle cx="18" cy="10" r="9.8" fill="#c6c6c6"/><path d="M0 39V33A11 11 0 0 1 11 22H25A11 11 0 0 1 36 33V39Q36 41 34 41H2Q0 41 0 39Z" fill="#c6c6c6"/></svg>
<div class="t" style="left:729.6px;top:191px;font-size:14px;color:#2c363a;letter-spacing:-0.1px">A <span style="color:#1f9ae0">Tesoreria</span> el 2025-09-30 13:18</div>
<svg style="left:730.5px;top:219px" width="17" height="12" viewBox="0 0 17 12"><rect x="0" y="0" width="17" height="12" rx="1.2" fill="#1a9fe8"/><path d="M0.6 1.3L8.5 7L16.4 1.3" fill="none" stroke="#fff" stroke-width="1.3"/></svg>
<div class="t" style="left:750.8px;top:216px;font-size:13.5px;color:#1f9ae0;letter-spacing:-0.55px">Detalles</div>
<svg style="left:808.8px;top:217.3px" width="16" height="16" viewBox="0 0 16 16"><circle cx="8" cy="8" r="7.8" fill="#1a9fe8"/><circle cx="8" cy="4.3" r="1.4" fill="#fff"/><path d="M6.2 7H9V11.4H10V12.6H6.2V11.4H7.2V8.2H6.2Z" fill="#fff"/></svg>
<div class="t" style="left:828.6px;top:216px;font-size:13.5px;color:#1f9ae0;letter-spacing:-0.6px">Cabeceras</div>

<!-- attachments -->
<div class="a" style="left:659px;top:255px;width:693px;height:170px;border:1px solid #eee;background:#fbfbfb"></div>
<svg style="left:667.3px;top:260px" width="14" height="18" viewBox="0 0 14 18"><path d="M1.6 0.9H8.6L13.1 5.4V16.1A1 1 0 0 1 12.1 17.1H1.6A1 1 0 0 1 0.6 16.1V1.9A1 1 0 0 1 1.6 0.9Z" fill="none" stroke="#2c363a" stroke-width="1.7"/><path d="M8.4 1V5.6H13" fill="none" stroke="#2c363a" stroke-width="1.3"/><path d="M6.4 5.4C6 7.8 4.8 11 3 13.6C5.6 12.4 8.6 11.8 10.6 12C8.6 10.8 7 8.8 6.4 5.4Z" fill="none" stroke="#2c363a" stroke-width="1.1"/></svg>
<div class="t" style="left:687.1px;top:261px;font-size:14px;color:#2c363a;letter-spacing:0.05px">solicitud de disponibilidad presupuestaria-signed.pdf</div>
<div class="t" style="left:1018.9px;top:261px;font-size:14px;color:#777">(~265 KB)</div>
<svg style="left:1089px;top:267px" width="9" height="5" viewBox="0 0 9 5"><path d="M0 0H9L4.5 5Z" fill="#1a9fe8"/></svg>
<svg style="left:667.3px;top:288px" width="14" height="18" viewBox="0 0 14 18"><path d="M1.6 0.9H8.6L13.1 5.4V16.1A1 1 0 0 1 12.1 17.1H1.6A1 1 0 0 1 0.6 16.1V1.9A1 1 0 0 1 1.6 0.9Z" fill="none" stroke="#2c363a" stroke-width="1.7"/><path d="M8.4 1V5.6H13" fill="none" stroke="#2c363a" stroke-width="1.3"/><path d="M6.4 5.4C6 7.8 4.8 11 3 13.6C5.6 12.4 8.6 11.8 10.6 12C8.6 10.8 7 8.8 6.4 5.4Z" fill="none" stroke="#2c363a" stroke-width="1.1"/></svg>
<div class="t" style="left:687.1px;top:289px;font-size:14px;color:#2c363a;letter-spacing:-0.45px">ESPECIFICACIONES TECNICAS-signed-signed.pdf</div>
<div class="t" style="left:999.5px;top:289px;font-size:14px;color:#777">(~207 KB)</div>
<svg style="left:1069.8px;top:295px" width="9" height="5" viewBox="0 0 9 5"><path d="M0 0H9L4.5 5Z" fill="#1a9fe8"/></svg>
<svg style="left:667.3px;top:316px" width="14" height="18" viewBox="0 0 14 18"><path d="M1.6 0.9H8.6L13.1 5.4V16.1A1 1 0 0 1 12.1 17.1H1.6A1 1 0 0 1 0.6 16.1V1.9A1 1 0 0 1 1.6 0.9Z" fill="none" stroke="#2c363a" stroke-width="1.7"/><path d="M8.4 1V5.6H13" fill="none" stroke="#2c363a" stroke-width="1.3"/><path d="M6.4 5.4C6 7.8 4.8 11 3 13.6C5.6 12.4 8.6 11.8 10.6 12C8.6 10.8 7 8.8 6.4 5.4Z" fill="none" stroke="#2c363a" stroke-width="1.1"/></svg>
<div class="t" style="left:687.1px;top:317px;font-size:14px;color:#2c363a;letter-spacing:-0.5px">INFORME DE DETERMINACION DE NECESIDAD-signed-signed.pdf</div>
<div class="t" style="left:1098.5px;top:317px;font-size:14px;color:#777">(~244 KB)</div>
<svg style="left:1169px;top:323px" width="9" height="5" viewBox="0 0 9 5"><path d="M0 0H9L4.5 5Z" fill="#1a9fe8"/></svg>
<svg style="left:667.3px;top:344px" width="14" height="18" viewBox="0 0 14 18"><path d="M1.6 0.9H8.6L13.1 5.4V16.1A1 1 0 0 1 12.1 17.1H1.6A1 1 0 0 1 0.6 16.1V1.9A1 1 0 0 1 1.6 0.9Z" fill="none" stroke="#2c363a" stroke-width="1.7"/><path d="M8.4 1V5.6H13" fill="none" stroke="#2c363a" stroke-width="1.3"/><path d="M6.4 5.4C6 7.8 4.8 11 3 13.6C5.6 12.4 8.6 11.8 10.6 12C8.6 10.8 7 8.8 6.4 5.4Z" fill="none" stroke="#2c363a" stroke-width="1.1"/></svg>
<div class="t" style="left:687.1px;top:345px;font-size:14px;color:#2c363a;letter-spacing:-0.17px">MEMORÁNDUM Nº283-signed.pdf</div>
<div class="t" style="left:904.3px;top:345px;font-size:14px;color:#777">(~288 KB)</div>
<svg style="left:974.7px;top:351px" width="9" height="5" viewBox="0 0 9 5"><path d="M0 0H9L4.5 5Z" fill="#1a9fe8"/></svg>
<svg style="left:997.2px;top:344px" width="14" height="18" viewBox="0 0 14 18"><path d="M1.6 0.9H8.6L13.1 5.4V16.1A1 1 0 0 1 12.1 17.1H1.6A1 1 0 0 1 0.6 16.1V1.9A1 1 0 0 1 1.6 0.9Z" fill="none" stroke="#2c363a" stroke-width="1.7"/><path d="M8.4 1V5.6H13" fill="none" stroke="#2c363a" stroke-width="1.3"/><path d="M6.4 5.4C6 7.8 4.8 11 3 13.6C5.6 12.4 8.6 11.8 10.6 12C8.6 10.8 7 8.8 6.4 5.4Z" fill="none" stroke="#2c363a" stroke-width="1.1"/></svg>
<div class="t" style="left:1017.0px;top:345px;font-size:14px;color:#2c363a;letter-spacing:-0.17px">MEMORÁNDUM Nº850-signed.pdf</div>
<div class="t" style="left:1234.4px;top:345px;font-size:14px;color:#777">(~364 KB)</div>
<svg style="left:1305px;top:351px" width="9" height="5" viewBox="0 0 9 5"><path d="M0 0H9L4.5 5Z" fill="#1a9fe8"/></svg>
<svg style="left:667.3px;top:372px" width="14" height="18" viewBox="0 0 14 18"><path d="M1.6 0.9H8.6L13.1 5.4V16.1A1 1 0 0 1 12.1 17.1H1.6A1 1 0 0 1 0.6 16.1V1.9A1 1 0 0 1 1.6 0.9Z" fill="none" stroke="#2c363a" stroke-width="1.7"/><path d="M8.4 1V5.6H13" fill="none" stroke="#2c363a" stroke-width="1.3"/><path d="M6.4 5.4C6 7.8 4.8 11 3 13.6C5.6 12.4 8.6 11.8 10.6 12C8.6 10.8 7 8.8 6.4 5.4Z" fill="none" stroke="#2c363a" stroke-width="1.1"/></svg>
<div class="t" style="left:687.1px;top:373px;font-size:14px;color:#2c363a;letter-spacing:0.02px">Presupuesto de catálogo electrónico.pdf</div>
<div class="t" style="left:942.6px;top:373px;font-size:14px;color:#777">(~92 KB)</div>
<svg style="left:1005.2px;top:379px" width="9" height="5" viewBox="0 0 9 5"><path d="M0 0H9L4.5 5Z" fill="#1a9fe8"/></svg>
<svg style="left:667.3px;top:400px" width="14" height="18" viewBox="0 0 14 18"><path d="M1.6 0.9H8.6L13.1 5.4V16.1A1 1 0 0 1 12.1 17.1H1.6A1 1 0 0 1 0.6 16.1V1.9A1 1 0 0 1 1.6 0.9Z" fill="none" stroke="#2c363a" stroke-width="1.7"/><path d="M8.4 1V5.6H13" fill="none" stroke="#2c363a" stroke-width="1.3"/><path d="M6.4 5.4C6 7.8 4.8 11 3 13.6C5.6 12.4 8.6 11.8 10.6 12C8.6 10.8 7 8.8 6.4 5.4Z" fill="none" stroke="#2c363a" stroke-width="1.1"/></svg>
<div class="t" style="left:687.1px;top:401px;font-size:14px;color:#2c363a;letter-spacing:-0.46px">CERTIFICACION PAC Y CATE-signed.pdf</div>
<div class="t" style="left:938.3px;top:401px;font-size:14px;color:#777">(~242 KB)</div>
<svg style="left:1009px;top:407px" width="9" height="5" viewBox="0 0 9 5"><path d="M0 0H9L4.5 5Z" fill="#1a9fe8"/></svg>
<!-- body -->
<div class="a" style="left:659.5px;top:447.9px;width:700px;font-family:'Liberation Mono',monospace;font-size:12px;line-height:19.4px;color:#2c363a;letter-spacing:-0.055px;white-space:pre">Solicitud de Certificación Presupuestaria, para la ADQUISICION DE PRENDAS PARA AUTORIDADES,
PERSONAL ADMINISTRATIVO, Y DE SERVICIOS VARIOS DEL GAD PARROQUIAL SAN JUAN, a través de catalogo
electrónico.</div>

<!-- ============ TASKBAR ============ -->
<div class="a" style="left:0;top:728px;width:1366px;height:40px;background:#1f2a30"></div>
<div class="a" style="left:0;top:728px;width:294px;height:40px;background:linear-gradient(90deg,#45484b,#43474a 240px,#3d4145)"></div>
<div class="a" style="left:246px;top:728px;width:44px;height:40px;background:#595c5f"></div>
<div class="a" style="left:290px;top:728px;width:4px;height:40px;background:#44484b"></div>
<!-- indicators -->
<div class="a" style="left:246px;top:766px;width:48px;height:2px;background:#76b9ed"></div>
<div class="a" style="left:348px;top:766px;width:40px;height:2px;background:#76b9ed"></div>
<div class="a" style="left:397px;top:766px;width:40px;height:2px;background:#76b9ed"></div>
<div class="a" style="left:446px;top:766px;width:40px;height:2px;background:#76b9ed"></div>
<div class="a" style="left:495px;top:766px;width:40px;height:2px;background:#76b9ed"></div>
<!-- windows logo -->
<svg style="left:16px;top:740px" width="17" height="16" viewBox="0 0 17 16"><path d="M0 2.2L7 1.2V7.4H0Z M8 1L17 0V7.4H8Z M0 8.4H7V14.6L0 13.6Z M8 8.4H17V16L8 14.8Z" fill="#fff"/></svg>
<!-- search -->
<svg style="left:61px;top:737px" width="23" height="22" viewBox="0 0 23 22"><circle cx="13.8" cy="8.4" r="7" fill="none" stroke="#fff" stroke-width="1.9"/><path d="M8.6 13.6L1.2 21" stroke="#fff" stroke-width="2.2" stroke-linecap="round"/></svg>
<!-- copilot -->
<svg style="left:111px;top:737px" width="24" height="22" viewBox="0 0 24 22"><defs><linearGradient id="cp1" x1="0" y1="0" x2="0" y2="1"><stop offset="0" stop-color="#2d8ef0"/><stop offset="0.45" stop-color="#3fc7a0"/><stop offset="0.75" stop-color="#b8d43a"/><stop offset="1" stop-color="#f59a2c"/></linearGradient><linearGradient id="cp2" x1="0" y1="0" x2="0.3" y2="1"><stop offset="0" stop-color="#3b5fe0"/><stop offset="0.35" stop-color="#b45be6"/><stop offset="0.75" stop-color="#f0669a"/><stop offset="1" stop-color="#f7864a"/></linearGradient></defs><path d="M8.5 0.5H15Q17.5 0.5 16.8 3L12.5 18Q11.5 21.5 8 21.5H4Q0.5 21.5 1.3 18.3L5 3.5Q5.8 0.5 8.5 0.5Z" fill="url(#cp1)"/><path d="M15 4H20Q23.5 4 23.5 7.5V17.5Q23.5 21.5 19.5 21.5H9Q12 21 13 17.5Z" fill="url(#cp2)"/><path d="M5 21.5Q9 21.5 11 18L13 11Q12.5 16 9.5 21.5Z" fill="#f2543a" opacity="0.9"/></svg>
<!-- IE -->
<svg style="left:160px;top:737px" width="24" height="23" viewBox="0 0 24 23"><path d="M12 3.5A8.5 8.5 0 0 0 3.6 12.5A8.6 8.6 0 0 0 19.6 16H14.8A4.2 4.2 0 0 1 8 13.8H20.6A8.8 8.8 0 0 0 12 3.5Z M8.1 10.8A3.9 3.9 0 0 1 15.9 10.8Z" fill="#3cb4ef"/><path d="M2 21C-1 18 6 6 14 2.6C19 0.5 23 0 23.5 1.5C24 3 21.5 5.5 20 6.5C21 4.5 22 2.5 20 2.5C16 2.5 6 9 3 16C2 18.5 3 20 5 19.5L4 21C3.2 21.5 2.5 21.5 2 21Z" fill="#f5c932"/></svg>
<!-- edge -->
<svg style="left:208.7px;top:735.5px" width="25" height="25" viewBox="0 0 25 25"><defs><linearGradient id="ed1" x1="0" y1="0" x2="0.4" y2="1"><stop offset="0" stop-color="#1a8cf0"/><stop offset="1" stop-color="#1c62cc"/></linearGradient><linearGradient id="ed2" x1="0" y1="0" x2="1" y2="0.6"><stop offset="0" stop-color="#36b4f0"/><stop offset="0.5" stop-color="#2ccbc0"/><stop offset="1" stop-color="#5ee04e"/></linearGradient></defs><circle cx="12.3" cy="12.4" r="12.2" fill="url(#ed1)"/><path d="M0.6 9.5Q2.4 0.4 12.3 0.2Q22.8 0.4 24.4 10.5Q24.8 16.8 19 17Q14.6 17 13.8 14Q13.2 10.2 10.2 9.8Q4.6 9.2 0.6 12Z" fill="url(#ed2)"/><path d="M8.6 11.2Q12.6 9.6 13.8 13.6Q14.6 16.8 18.4 17.4Q14.8 22 12.4 23Q8.4 20.4 8 15.4Q7.8 12.4 8.6 11.2Z" fill="#1552b0"/><ellipse cx="11.4" cy="13" rx="2.4" ry="2.6" fill="#123a70"/></svg>
<!-- chrome -->
<svg style="left:257.8px;top:735.6px" width="26" height="26" viewBox="0 0 26 26"><path d="M12 12L2.04 6.25A11.5 11.5 0 0 1 21.96 6.25Z" fill="#e5463b"/><path d="M12 12L21.96 6.25A11.5 11.5 0 0 1 12 23.5Z" fill="#f5c231"/><path d="M12 12L12 23.5A11.5 11.5 0 0 1 2.04 6.25Z" fill="#2e9e4f"/><circle cx="12" cy="12" r="5.4" fill="#fff"/><circle cx="12" cy="12" r="4.2" fill="#3f7fe6"/><circle cx="17.9" cy="17.8" r="7.4" fill="#fff"/><circle cx="17.9" cy="17.8" r="6" fill="#dde7fb" stroke="#2256d0" stroke-width="1.5"/><circle cx="17.9" cy="15.9" r="1.8" fill="none" stroke="#2256d0" stroke-width="1.3"/><path d="M14.6 21.4Q17.9 18 21.2 21.4" fill="none" stroke="#2256d0" stroke-width="1.3"/></svg>
<!-- outlook -->
<svg style="left:307px;top:736px" width="24" height="23" viewBox="0 0 24 23"><path d="M9 1H20L24 5V17L16 23H9Z" fill="#28a8ea"/><path d="M9 9L24 6V17L16 23H9Z" fill="#50d9ff"/><path d="M9 6H24L16.5 12Z" fill="#0a64c1" opacity="0.6"/><rect x="0" y="5" width="13" height="13" rx="1.5" fill="#0f6cc4"/><ellipse cx="6.5" cy="11.5" rx="3.3" ry="3.9" fill="none" stroke="#fff" stroke-width="1.8"/></svg>
<!-- acrobat -->
<svg style="left:357.5px;top:737px" width="21" height="21" viewBox="0 0 21 21"><rect x="0" y="0" width="21" height="21" rx="3" fill="#b30b00"/><path d="M10 3.5C9 7 7.5 11.5 4.5 15.5C8 14.2 12.5 13.2 16.5 13.8C13.5 11.8 11 8 10 3.5Z" fill="none" stroke="#fff" stroke-width="1.5" stroke-linejoin="round"/></svg>
<!-- firefox -->
<svg style="left:405px;top:736px" width="24" height="24" viewBox="0 0 24 24"><defs><radialGradient id="ff1" cx="0.6" cy="0.25" r="0.9"><stop offset="0" stop-color="#ffe34f"/><stop offset="0.45" stop-color="#ff7d2a"/><stop offset="1" stop-color="#e3245c"/></radialGradient></defs><path d="M12 23.5A11.2 11.2 0 0 1 1 12.5C1 8.5 3 5.5 4 5C4 7 4.5 8 5.5 8.5C6 6 8 4 10 3.5C9.5 5 10 6 11 6.5C12 3 15 1.5 16.5 0.5C16 2.5 17 4 18.5 5C21.5 7 23.2 9.5 23.2 12.5A11.2 11.2 0 0 1 12 23.5Z" fill="url(#ff1)"/><circle cx="12" cy="13" r="5.6" fill="#7542e5"/><path d="M6.5 12Q8 8 12 8Q15 8 17 10Q14 9 12 10Q9.5 11 9 13Z" fill="#ff9a30"/></svg>
<!-- explorer -->
<svg style="left:454.5px;top:739px" width="22" height="18" viewBox="0 0 22 18"><path d="M0 1.5A1.5 1.5 0 0 1 1.5 0H8L10 2H20.5A1.5 1.5 0 0 1 22 3.5V16.5A1.5 1.5 0 0 1 20.5 18H1.5A1.5 1.5 0 0 1 0 16.5Z" fill="#f5c32c"/><path d="M0 5H22V16.5A1.5 1.5 0 0 1 20.5 18H1.5A1.5 1.5 0 0 1 0 16.5Z" fill="#fcd95b"/><path d="M5 18V12.5A1.5 1.5 0 0 1 6.5 11H15.5A1.5 1.5 0 0 1 17 12.5V18H14.5V13.5H7.5V18Z" fill="#3b9fe0"/></svg>
<!-- word -->
<svg style="left:503px;top:737px" width="24" height="21" viewBox="0 0 24 21"><rect x="7" y="0" width="17" height="21" rx="1.5" fill="#2b7cd3"/><rect x="7" y="7" width="17" height="7" fill="#185abd"/><rect x="7" y="14" width="17" height="7" rx="1" fill="#103f91"/><rect x="7" y="0" width="17" height="7" rx="1.5" fill="#41a5ee"/><rect x="0" y="4.5" width="13" height="12.5" rx="1.5" fill="#185abd"/><path d="M2 7.5L3.8 14.5L6.5 9L9.2 14.5L11 7.5" fill="none" stroke="#fff" stroke-width="1.6" stroke-linejoin="round"/></svg>
<!-- tray -->
<svg style="left:1123px;top:743px" width="13" height="8" viewBox="0 0 13 8"><path d="M0.7 7.3L6.5 1.5L12.3 7.3" fill="none" stroke="#fff" stroke-width="1.4"/></svg>
<svg style="left:1144px;top:740px" width="18" height="15" viewBox="0 0 18 15"><path d="M0.7 5H3.6L7.6 1V14L3.6 10H0.7Z" fill="none" stroke="#fff" stroke-width="1.2" stroke-linejoin="round"/><path d="M10.2 4.8Q11.8 7.5 10.2 10.2M12.6 3Q15.4 7.5 12.6 12M15 1.3Q18.8 7.5 15 13.7" fill="none" stroke="#fff" stroke-width="1.2"/></svg>
<svg style="left:1172px;top:741px" width="13" height="14" viewBox="0 0 13 14"><path d="M0.8 5.6Q6 0.5 12.4 2.6M0.8 8.6Q5 4.6 10.6 6M0.8 11.6Q3.6 8.6 8 9.5" fill="none" stroke="#cfd2d4" stroke-width="1.1"/><circle cx="10" cy="11.8" r="1.8" fill="#fff"/></svg>
<svg style="left:1196px;top:740px" width="12" height="15" viewBox="0 0 12 15"><rect x="1" y="3.5" width="7" height="8" rx="2" fill="none" stroke="#fff" stroke-width="1.2"/><path d="M8 6.5L11.2 4.5V10.5L8 8.5" fill="none" stroke="#fff" stroke-width="1.2"/><path d="M1.5 1.8Q4.5 0 7.5 1.8M1.5 13.2Q4.5 15 7.5 13.2" fill="none" stroke="#fff" stroke-width="1.1"/></svg>
<div class="t" style="left:1221px;top:741px;font-size:11px;color:#fff;letter-spacing:-0.5px">ESP</div>
<div class="t" style="left:1267px;top:732px;font-size:11.5px;color:#fff;letter-spacing:-0.1px">15:18</div>
<div class="t" style="left:1254.5px;top:750px;font-size:11.5px;color:#fff;letter-spacing:0.15px">30/9/2025</div>
<svg style="left:1325px;top:739px" width="26" height="24" viewBox="0 0 26 24"><path d="M0.5 0.5H16.5V11.5H7L3.5 15V11.5H0.5Z" fill="#fff"/><path d="M3 3.5H14M3 6H14M3 8.5H11" stroke="#1f2a30" stroke-width="1"/><circle cx="16" cy="16" r="7.2" fill="#1f2a30" stroke="#c9ccce" stroke-width="1.2"/><path d="M17 12.2H18.3V17.6H19.4V18.8H18.3V20.4H17V18.8H13.2V17.7Z M17 14.4L14.7 17.6H17Z" fill="#fff"/></svg>
<div class="a" style="left:1361px;top:728px;width:1px;height:40px;background:#6a7075"></div>

</body></html>
